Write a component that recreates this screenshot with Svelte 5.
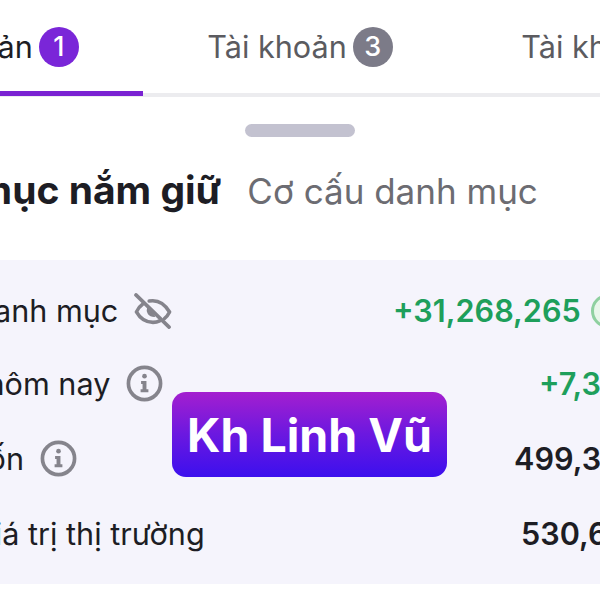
<script>
  const tabs = [
    { label: 'Tài khoản', count: 1, active: true },
    { label: 'Tài khoản', count: 3, active: false },
    { label: 'Tài khoản', count: 4, active: false }
  ];

  // the visible part of each value is all that is readable, so widths set where it starts
  const rows = [
    { label: 'Lãi/lỗ danh mục', indent: -112, icon: 'eye', value: '+31,268,265', green: true, width: 207, trend: true, height: 73 },
    { label: 'Lãi hôm nay', indent: -64, icon: 'info', value: '+7,3', green: true, width: 61, height: 72 },
    { label: 'Giá vốn', indent: -85, icon: 'info', value: '499,3', width: 86, height: 78 },
    { label: 'Giá trị thị trường', indent: -28, value: '530,6', width: 79, height: 73 }
  ];
</script>

<div class="page">
  <div class="tabs">
    {#each tabs as tab}
      <div class="tab" class:active={tab.active}>
        <span>{tab.label}</span>
        <span class="count">{tab.count}</span>
      </div>
    {/each}
  </div>

  <div class="handle"></div>

  <div class="headings">
    <span class="current">Danh mục nắm giữ</span>
    <span class="other">Cơ cấu danh mục</span>
  </div>

  <div class="panel">
    {#each rows as row}
      <div class="row" style="height: {row.height}px">
        <span class="label" style="margin-left: {row.indent}px">{row.label}</span>
        {#if row.icon === 'eye'}
          <svg class="eye" width="38" height="36" viewBox="0 0 40 38" fill="none" stroke="#85848c" stroke-width="3.8" stroke-linecap="round" stroke-linejoin="round">
            <path d="M9 12 C6 14 4 17 2.500 20 C7 28 13 31 20 31 C23 31 25 30.500 27 29.500" />
            <path d="M16 8.500 C24 7 32 11 37.500 20 C36 23 34 25.500 32 27" />
            <path d="M14.500 15.500 C13 20 15.500 24.500 21.500 24.500 Z" fill="#85848c" stroke-width="1.500" />
            <path d="M2 2 L37 36" />
          </svg>
        {:else if row.icon === 'info'}
          <svg class="info" width="37" height="37" viewBox="0 0 38 38" fill="none">
            <circle cx="19" cy="19" r="16.500" stroke="#85848c" stroke-width="3.800" />
            <circle cx="19" cy="11.500" r="2.400" fill="#85848c" />
            <path d="M15.500 16.500 H21 V25 H23 V28 H15 V25 H17 V19.500 H15.500 Z" fill="#85848c" />
          </svg>
        {/if}
        <span class="value" class:green={row.green} style="width: {row.width}px">
          {row.value}
          {#if row.trend}<span class="trend"></span>{/if}
        </span>
      </div>
    {/each}
  </div>

  <div class="tag">Kh Linh Vũ</div>
</div>

<style>
  :global(body) {
    background: #fff;
  }

  .page {
    position: relative;
    width: 600px;
    height: 600px;
    overflow: hidden;
    background: #fff;
    font-family: Inter, "Liberation Sans", sans-serif;
    color: #1d1d24;
  }

  .tabs {
    display: flex;
    width: 942px;
    margin-left: -171px;
    height: 97px;
  }

  .tab {
    position: relative;
    flex: 1;
    display: flex;
    align-items: center;
    justify-content: center;
    gap: 6px;
    height: 93px;
    font-size: 30.6px;
    color: #5b5b60;
    border-bottom: 4px solid #ececef;
  }

  .tab.active {
    color: #1d1d24;
  }

  .tab.active::after {
    content: '';
    position: absolute;
    left: 0;
    right: 0;
    bottom: -3px;
    height: 5px;
    background: #7a22d2;
  }

  .count {
    display: flex;
    align-items: center;
    justify-content: center;
    width: 40px;
    height: 40px;
    border-radius: 50%;
    background: #7c7b88;
    color: #fff;
    font-size: 27px;
    font-weight: 500;
  }

  .active .count {
    background: #7a26d8;
  }

  .handle {
    width: 110px;
    height: 13px;
    margin: 27px auto 0;
    border-radius: 7px;
    background: #c3c2d0;
  }

  .headings {
    display: flex;
    align-items: baseline;
    gap: 26px;
    margin: 31px 0 0 -132px;
    height: 51px;
    white-space: nowrap;
    font-size: 35px;
    line-height: 44px;
  }

  .current {
    font-size: 39px;
    font-weight: 700;
  }

  .other {
    color: #6c6c72;
  }

  .panel {
    display: flex;
    flex-direction: column;
    height: 297px;
    margin-top: 41px;
    padding: 14px 0 13px;
    background: #f5f4fc;
  }

  .row {
    display: flex;
    align-items: center;
    font-size: 30.6px;
    white-space: nowrap;
  }

  .label {
    flex: none;
  }

  .eye,
  .info {
    margin-left: 16px;
    flex: none;
  }

  .value {
    flex: none;
    margin-left: auto;
    display: flex;
    align-items: center;
    gap: 10px;
    font-weight: 600;
    overflow: hidden;
  }

  .green {
    color: #1e9f5b;
  }

  .trend {
    flex: none;
    width: 34px;
    height: 34px;
    box-sizing: border-box;
    border: 3px solid #8fd0a0;
    border-radius: 50%;
    background: #e8f6ea;
  }

  .tag {
    position: absolute;
    left: 172px;
    top: 392px;
    width: 275px;
    height: 85px;
    display: flex;
    align-items: center;
    justify-content: center;
    border-radius: 14px;
    background: linear-gradient(180deg, #a41fcf 0%, #6b18e0 50%, #3c10ee 100%);
    color: #fff;
    font-size: 46.500px;
    font-weight: 700;
  }
</style>
